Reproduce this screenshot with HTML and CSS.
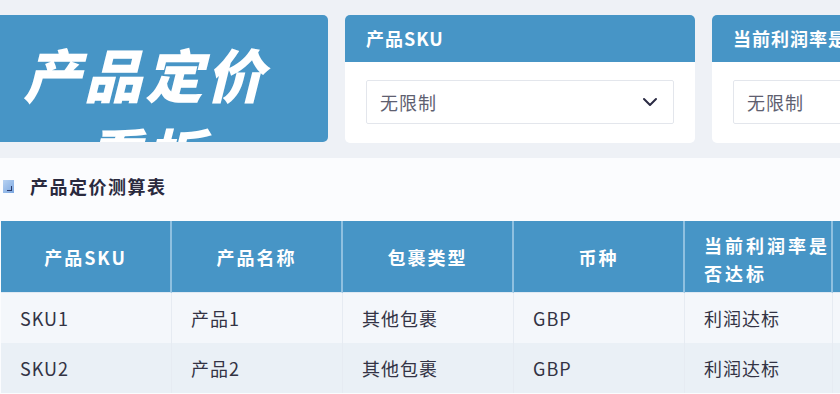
FILE: index.html
```html
<!DOCTYPE html>
<html lang="zh-CN">
<head>
<meta charset="utf-8">
<title>产品定价看板</title>
<link rel="stylesheet" href="styles.css">
</head>
<body>
<div class="top">
  <div class="banner"><div class="banner-text">产品定价看板</div></div>
  <div class="filter">
    <div class="filter-head">产品SKU</div>
    <div class="filter-body">
      <div class="select">
        <span>无限制</span>
        <svg class="chev" width="16" height="10" viewBox="0 0 16 10"><path d="M2 2 L8 8 L14 2" fill="none" stroke="#2b2b44" stroke-width="2" stroke-linecap="round" stroke-linejoin="round"/></svg>
      </div>
    </div>
  </div>
  <div class="filter">
    <div class="filter-head">当前利润率是否达标</div>
    <div class="filter-body">
      <div class="select">
        <span>无限制</span>
        <svg class="chev" width="16" height="10" viewBox="0 0 16 10"><path d="M2 2 L8 8 L14 2" fill="none" stroke="#2b2b44" stroke-width="2" stroke-linecap="round" stroke-linejoin="round"/></svg>
      </div>
    </div>
  </div>
</div>
<div class="panel">
  <div class="section-title">
    <span class="sq"><span class="mark"></span></span>
    <span>产品定价测算表</span>
  </div>
  <div class="table">
    <div class="th">产品SKU</div>
    <div class="th">产品名称</div>
    <div class="th">包裹类型</div>
    <div class="th">币种</div>
    <div class="th th-left">当前利润率是否达标</div>
    <div class="th">当前售价</div>

    <div class="td r1">SKU1</div>
    <div class="td r1">产品1</div>
    <div class="td r1">其他包裹</div>
    <div class="td r1">GBP</div>
    <div class="td r1">利润达标</div>
    <div class="td r1">10</div>

    <div class="td r2">SKU2</div>
    <div class="td r2">产品2</div>
    <div class="td r2">其他包裹</div>
    <div class="td r2">GBP</div>
    <div class="td r2">利润达标</div>
    <div class="td r2">12</div>
  </div>
</div>
</body>
</html>
```
FILE: styles.css
```css
html, body {
  margin: 0;
  padding: 0;
}
body {
  width: 840px;
  height: 394px;
  overflow: hidden;
  background: #eef1f6;
  font-family: "Noto Sans CJK SC", "Noto Sans", sans-serif;
  color: #333344;
}
.top {
  display: flex;
  gap: 17px;
  padding-top: 15px;
  height: 128px;
}
.banner {
  flex: 0 0 328px;
  height: 127px;
  background: #4795c6;
  border-radius: 0 5px 5px 0;
  overflow: hidden;
}
.banner-text {
  height: 109px;
  overflow: hidden;
  padding: 18px 58px 0 20px;
  text-align: center;
  color: #fff;
  font-size: 58px;
  font-weight: 900;
  font-style: italic;
  line-height: 80px;
  letter-spacing: 3px;
}
.filter {
  flex: 0 0 350px;
  height: 128px;
  background: #fff;
  border-radius: 5px;
  overflow: hidden;
}
.filter-head {
  height: 47px;
  line-height: 47px;
  background: #4795c6;
  color: #fff;
  font-size: 18px;
  font-weight: 700;
  letter-spacing: 1px;
  padding-left: 21px;
  white-space: nowrap;
  overflow: hidden;
}
.filter-body {
  padding: 18px 21px;
}
.select {
  height: 42px;
  border: 1px solid #e3e6ec;
  border-radius: 2px;
  display: flex;
  align-items: center;
  justify-content: space-between;
  padding: 0 15px 0 13px;
  font-size: 18px;
  letter-spacing: 1px;
  color: #5e6070;
}
.chev {
  display: block;
}
.panel {
  margin-top: 15px;
  background: #fbfcfe;
  height: 240px;
  overflow: hidden;
}
.section-title {
  display: flex;
  align-items: center;
  gap: 16px;
  padding: 17px 0 0 3px;
  height: 22px;
  font-size: 18px;
  font-weight: 700;
  letter-spacing: 1.5px;
  color: #2a2a3e;
}
.sq {
  position: relative;
  width: 11px;
  height: 13px;
  background: linear-gradient(135deg, #b8d2f2, #7aa6e0);
}
.mark {
  position: absolute;
  right: 2px;
  bottom: 2px;
  width: 4px;
  height: 4px;
  border-right: 1.5px solid #2b3a6a;
  border-bottom: 1.5px solid #2b3a6a;
}
.table {
  display: grid;
  grid-template-columns: 171px 171px 171px 171px 148px 171px;
  grid-template-rows: 72px 50px 50px;
  margin: 24px 0 0 1px;
  width: 1010px;
}
.th {
  background: #4795c6;
  color: #fff;
  font-size: 18px;
  font-weight: 700;
  letter-spacing: 2px;
  display: flex;
  align-items: center;
  justify-content: center;
  text-align: center;
  border-right: 2px solid #8fc0e0;
  border-bottom: 1px solid #dfe9f3;
  overflow: hidden;
}
.th-left {
  justify-content: flex-start;
  text-align: left;
  padding: 4px 0 0 19px;
  line-height: 28px;
  letter-spacing: 3px;
  box-sizing: border-box;
}
.td {
  display: flex;
  align-items: center;
  padding-left: 19px;
  font-size: 18px;
  letter-spacing: 1px;
  color: #333344;
  border-right: 1px solid #e6ebf2;
}
.r1 {
  background: #f4f7fb;
}
.r2 {
  background: #eaf0f6;
}
```
